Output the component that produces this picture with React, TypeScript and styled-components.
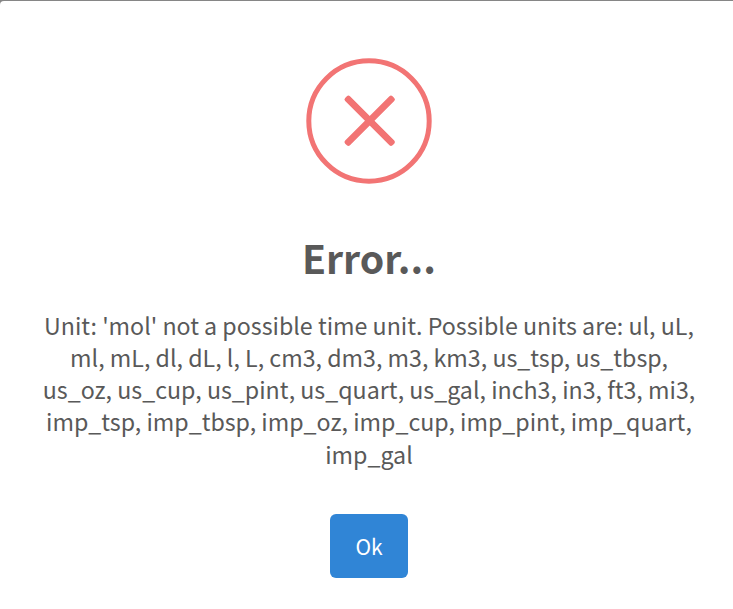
import React from "react";
import styled, { createGlobalStyle } from "styled-components";

const GlobalStyle = createGlobalStyle`
  * { box-sizing: border-box; }
  body {
    margin: 0;
    background: #868686;
    font-family: "Source Sans Pro", "Noto Sans CJK SC", "Noto Sans", sans-serif;
    color: #595959;
  }
`;

const Dialog = styled.main`
  width: 733px;
  height: 608px;
  margin-top: 1px;
  padding: 56px 5px 0 10px;
  border-top-left-radius: 4px;
  background: #fff;
  display: flex;
  flex-direction: column;
  align-items: center;
  overflow: hidden;
`;

const ErrorIcon = styled.svg`
  display: block;
  width: 128px;
  height: 128px;
  flex: none;
`;

const Title = styled.h2`
  margin: 42px 0 0;
  height: 60px;
  font-size: 39.2px;
  font-weight: 700;
  line-height: 60px;
  white-space: nowrap;
`;

const Message = styled.p`
  margin: 21.8px 0 0;
  font-size: 23.21px;
  line-height: 32.2px;
  text-align: center;
`;

const Line = styled.span`
  display: block;
  white-space: nowrap;
`;

const OkButton = styled.button`
  width: 78px;
  height: 64px;
  margin-top: 44.2px;
  padding: 1px 0 0;
  border: 0;
  border-radius: 6px;
  background: #3085d6;
  color: #fff;
  font: 400 21px/63px "Source Sans Pro", "Noto Sans CJK SC", sans-serif;
`;

const lines = [
  "Unit: 'mol' not a possible time unit. Possible units are: ul, uL,",
  "ml, mL, dl, dL, l, L, cm3, dm3, m3, km3, us_tsp, us_tbsp,",
  "us_oz, us_cup, us_pint, us_quart, us_gal, inch3, in3, ft3, mi3,",
  "imp_tsp, imp_tbsp, imp_oz, imp_cup, imp_pint, imp_quart,",
  "imp_gal",
];

export default function App() {
  return (
    <>
      <GlobalStyle />
      <Dialog role="dialog" aria-labelledby="title">
        <ErrorIcon viewBox="0 0 128 128" aria-hidden="true">
          <circle cx="64" cy="64" r="60.2" fill="none" stroke="#f27474" strokeWidth="5" />
          <g fill="#f27474" transform="translate(0.7 -0.2)">
            <rect x="30.5" y="60.6" width="67" height="6.8" rx="2.2" transform="rotate(45 64 64)" />
            <rect x="30.5" y="60.6" width="67" height="6.8" rx="2.2" transform="rotate(-45 64 64)" />
          </g>
        </ErrorIcon>
        <Title id="title">Error...</Title>
        <Message>
          {lines.map((line) => (
            <Line key={line}>{line}</Line>
          ))}
        </Message>
        <OkButton type="button">Ok</OkButton>
      </Dialog>
    </>
  );
}
